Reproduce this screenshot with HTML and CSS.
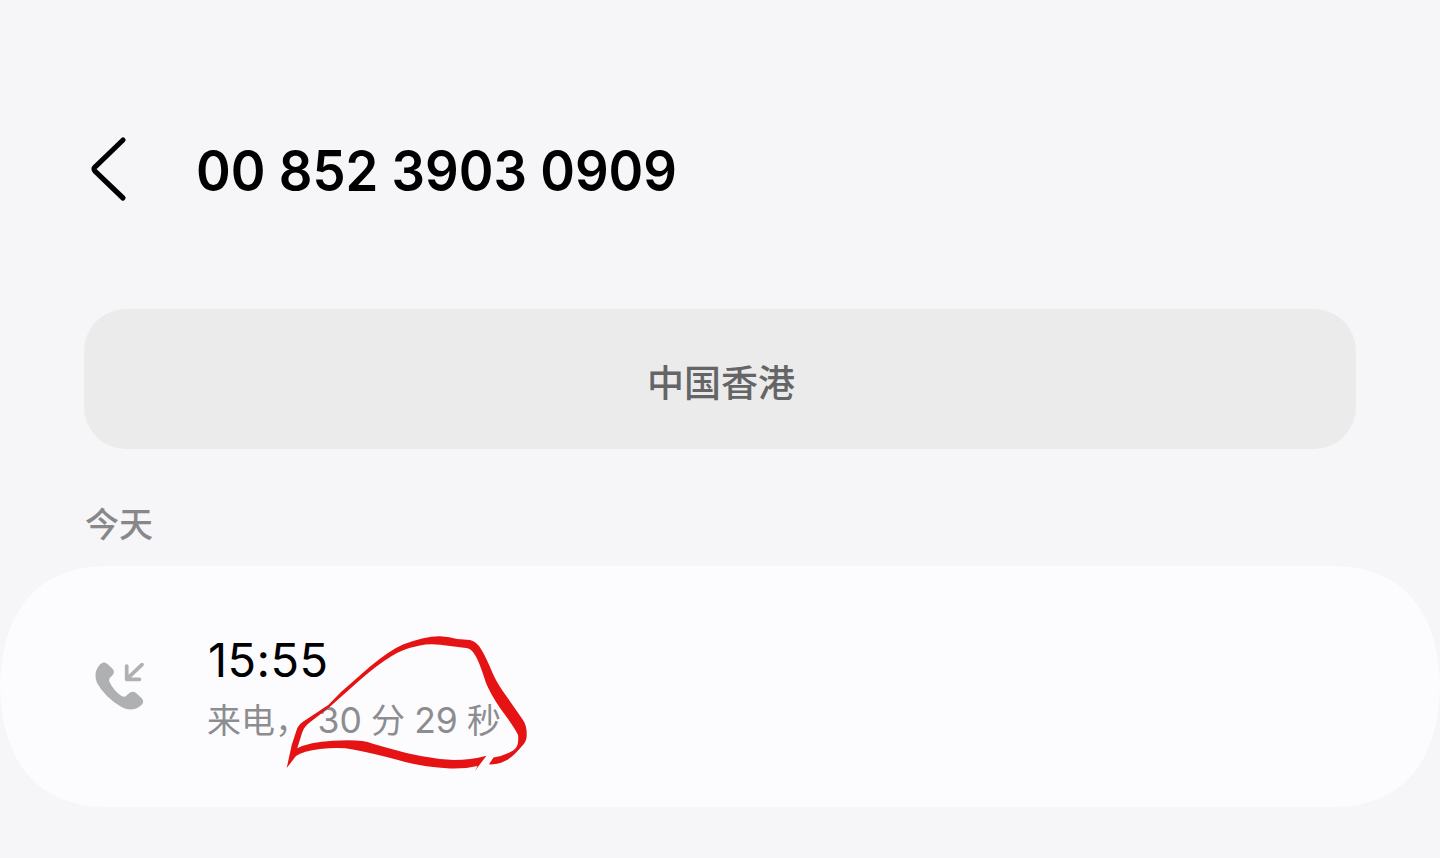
FILE: index.html
```html
<!DOCTYPE html>
<html lang="zh-CN">
<head>
<meta charset="utf-8">
<title>00 852 3903 0909</title>
<link rel="stylesheet" href="styles.css">
</head>
<body>
<main class="screen">
  <header class="header">
    <svg class="back" viewBox="0 0 40 70" width="40" height="70" aria-label="返回"><path d="M34 5 6.500 31.500Q3.500 34 6.500 36.700L34 63"/></svg>
    <h1 class="title">00 852 3903 0909</h1>
  </header>
  <div class="region">中国香港</div>
  <h2 class="day">今天</h2>
  <section class="card">
    <svg class="card-shape" viewBox="0 0 1440 240" preserveAspectRatio="none"><path d="M104 0H1336C1401 2 1438 42 1440 120C1438 198 1401 238 1336 240H104C39 238 2 198 0 120C2 42 39 2 104 0Z"/></svg>
    <svg class="call" viewBox="0 0 54 54" width="54" height="54"><path class="handset" d="M5.200 4.200Q9 .8 12.500 4L17.300 8.500Q20.500 12 17.500 15.200Q13.200 18.500 14.300 21.500Q18.500 30.500 26.500 36Q30 38 32.500 34.500Q37 30 41 33L46.500 38Q50 41.500 46.500 45Q37.500 53 26.500 47Q9.500 37 1.800 22.500Q-2 12 5.200 4.200Z"/><path class="arrow" d="M31.700 6.200V19.300H44.500M32.300 18.700 47 4.600"/></svg>
    <div class="entry">
      <div class="time">15:55</div>
      <div class="detail"><span class="kind">来电，</span><span class="duration"><span class="num">30</span> 分 <span class="num">29</span> 秒</span></div>
    </div>
    <svg class="mark" viewBox="280 630 254 146" width="254" height="146"><path d="M286.700 768L291.700 745 297.300 728Q299 724 303.300 721.500L328.300 705 341 692 369.500 667Q390 650 403 644.500Q426 636 440 636.300Q450 637 457 639L470 640Q477 642 481 649Q486 657 493 674Q498 685 507 697L523 720Q527 726 526.700 735Q527 741 522 746Q513 757 506 760.500Q498 765 489 764.300L493.500 757.500Q500 757 507 753.500Q514 751 516.500 747Q519 743 518 735Q515 728 500 708Q490 693 486 683Q479 661 475 655Q471 648 466 648L450 646Q431 643 420 645.500Q402 649 391 656.500Q377 665 360 680L329 707.500 309 723Q304 727 302 733L297.300 748.300Q309 742 333 740.700Q362 739 372 743.500L386 747.500Q425 759 454 760Q470 760 486.500 755.700L475 770.700 477.500 766Q465 769 450 768.500Q421 767 398 760Q372 753 353 749.500Q340 747 320 749Q303 751 296 756Z"/></svg>
  </section>
</main>
</body>
</html>
```
FILE: styles.css
```css
* { box-sizing: border-box; }
body {
  margin: 0;
  background: #f6f6f8;
  font-family: Inter, "Noto Sans CJK SC", sans-serif;
}
.screen {
  height: 858px;
  overflow: hidden;
  display: flex;
  flex-direction: column;
  padding-top: 120px;
}
.header {
  display: flex;
  align-items: center;
  height: 100px;
  padding-left: 89px;
}
.back {
  fill: none;
  stroke: #000;
  stroke-width: 5.2;
  stroke-linecap: round;
}
.title {
  margin: 0 0 0 67px;
  padding-top: 1px;
  font-size: 56px;
  line-height: 80px;
  font-weight: 600;
  white-space: nowrap;
  transform: scaleX(.94);
  transform-origin: left;
}
.region {
  display: flex;
  align-items: center;
  justify-content: center;
  height: 140px;
  margin: 89px 84px 0;
  padding: 4px 0 0 2px;
  border-radius: 42px;
  background: #ebebeb;
  color: #656568;
  font: 500 37px/54px "Noto Sans CJK SC", sans-serif;
}
.day {
  margin: 49px 0 0 85px;
  color: #88888b;
  font: 500 34px/50px "Noto Sans CJK SC", sans-serif;
}
.card {
  position: relative;
  display: flex;
  height: 241px;
  margin-top: 18px;
  padding: 0 95px;
}
.card-shape {
  position: absolute;
  inset: 0;
  width: 100%;
  height: 100%;
  fill: #fcfcff;
}
.call {
  position: relative;
  margin-top: 94px;
}
.handset { fill: #afb0b2; }
.arrow {
  fill: none;
  stroke: #afb0b2;
  stroke-width: 3.7;
  stroke-linecap: round;
  stroke-linejoin: round;
}
.entry {
  position: relative;
  margin: 64px 0 0 58px;
}
.time {
  padding-left: 1px;
  font-size: 47px;
  line-height: 60px;
  letter-spacing: .4px;
}
.detail {
  display: flex;
  padding-top: 1px;
  color: #8d8d90;
  font-size: 34px;
  line-height: 60px;
  white-space: nowrap;
}
.kind { width: 110.5px; }
.duration { word-spacing: -.4px; }
.num { font-size: 35.5px; }
.mark {
  position: absolute;
  left: 280px;
  top: 64px;
  fill: #e51313;
}
```
